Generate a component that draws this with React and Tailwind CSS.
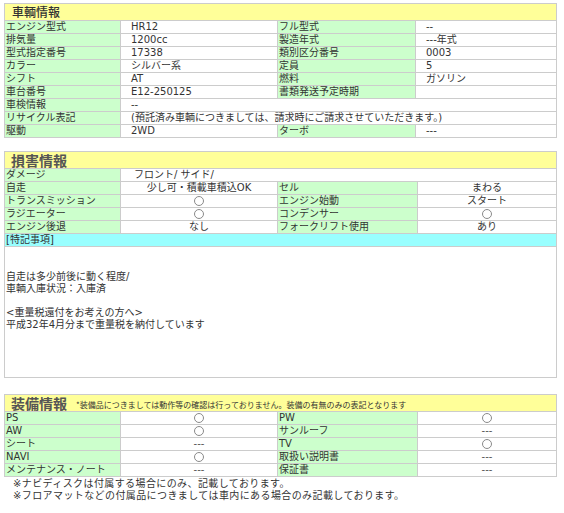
import React from "react";

const F = "font-['DejaVu_Sans','Noto_Sans_CJK_JP',sans-serif]";
const J = "font-['Noto_Sans_CJK_JP',sans-serif]";

const cell = "h-[12px] text-[10px] leading-[12px] whitespace-nowrap overflow-hidden text-[#333]";
const G = "bg-[#ccffcc]";

function Circle() {
  return (
    <span className="inline-block w-[10px] h-[10px] rounded-full border border-[#8a8a8a] align-top mt-px" />
  );
}

function Label({ children }) {
  return <div className={`${cell} ${G} pl-px`}>{children}</div>;
}
function Val({ children, center, span, pl = "pl-[10px]" }) {
  return (
    <div className={`${cell} bg-white ${center ? "text-center" : pl} ${span ? "col-span-3" : ""}`}>
      {children}
    </div>
  );
}

const s1 = [
  ["エンジン型式", "HR12", "フル型式", "--"],
  ["排気量", "1200cc", "製造年式", "---年式"],
  ["型式指定番号", "17338", "類別区分番号", "0003"],
  ["カラー", "シルバー系", "定員", "5"],
  ["シフト", "AT", "燃料", "ガソリン"],
  ["車台番号", "E12-250125", "書類発送予定時期", ""],
  ["車検情報", "--"],
  ["リサイクル表記", "(預託済み車輌につきましては、請求時にご請求させていただきます。)"],
  ["駆動", "2WD", "ターボ", "---"],
];

const s2 = [
  ["自走", "少し可・積載車積込OK", "セル", "まわる"],
  ["トランスミッション", "○", "エンジン始動", "スタート"],
  ["ラジエーター", "○", "コンデンサー", "○"],
  ["エンジン後退", "なし", "フォークリフト使用", "あり"],
];

const s3 = [
  ["PS", "○", "PW", "○"],
  ["AW", "○", "サンルーフ", "---"],
  ["シート", "---", "TV", "○"],
  ["NAVI", "○", "取扱い説明書", "---"],
  ["メンテナンス・ノート", "---", "保証書", "---"],
];

function V({ v }) {
  if (v === "○") return <Circle />;
  if (v === "---") return <span className="text-[#555]">---</span>;
  return v;
}

export default function App() {
  return (
    <div className={`${F} bg-white w-[564px] h-[513px] pt-[3px] pl-[4px]`}>
      {/* Section 1 */}
      <div className="w-[553px] bg-[#ccc] p-px flex flex-col gap-px">
        <div className="h-[16px] bg-[#ffff99] pl-[7px] flex items-center">
          <span className={`${J} text-[12px] leading-[16px] font-medium text-[#333]`}>車輌情報</span>
        </div>
        {s1.map((r, i) => (
          <div key={i} className="grid grid-cols-[115px_156px_137px_140px] gap-px">
            <Label>{r[0]}</Label>
            {r.length === 2 ? (
              <Val span>{r[1]}</Val>
            ) : (
              <>
                <Val>{r[1]}</Val>
                <Label>{r[2]}</Label>
                <Val>{r[3]}</Val>
              </>
            )}
          </div>
        ))}
      </div>

      {/* Section 2 */}
      <div className="mt-[13px] w-[553px] bg-[#ccc] p-px flex flex-col gap-px">
        <div className="h-[16px] bg-[#ffff99] pl-[6px] flex items-center">
          <span className={`${J} text-[14px] leading-[16px] font-bold text-[#555]`}>損害情報</span>
        </div>
        <div className="grid grid-cols-[115px_156px_139px_138px] gap-px">
          <Label>ダメージ</Label>
          <Val span pl="pl-[13px]">フロント/ サイド/</Val>
        </div>
        {s2.map((r, i) => (
          <div key={i} className="grid grid-cols-[115px_156px_139px_138px] gap-px">
            <Label>{r[0]}</Label>
            <Val center><V v={r[1]} /></Val>
            <Label>{r[2]}</Label>
            <Val center><V v={r[3]} /></Val>
          </div>
        ))}
        <div className={`${cell} bg-[#99ffff] pl-px`}>[特記事項]</div>
        <div className="h-[130px] bg-white pl-px text-[10px] leading-[12px] text-[#333]">
          <br />
          <br />
          自走は多少前後に動く程度/
          <br />
          車輌入庫状況：入庫済
          <br />
          <br />
          &lt;重量税還付をお考えの方へ&gt;
          <br />
          平成32年4月分まで重量税を納付しています
        </div>
      </div>

      {/* Section 3 */}
      <div className="mt-[16px] w-[553px] bg-[#ccc] p-px flex flex-col gap-px">
        <div className="h-[16px] bg-[#ffff99] pl-[6px] flex items-end gap-[9px]">
          <span className={`${J} text-[14px] leading-[16px] font-bold text-[#555]`}>装備情報</span>
          <span className={`${J} text-[8px] leading-[12px] text-[#333]`}>
            *装備品につきましては動作等の確認は行っておりません。装備の有無のみの表記となります
          </span>
        </div>
        {s3.map((r, i) => (
          <div key={i} className="grid grid-cols-[115px_156px_139px_138px] gap-px">
            <Label>{r[0]}</Label>
            <Val center><V v={r[1]} /></Val>
            <Label>{r[2]}</Label>
            <Val center><V v={r[3]} /></Val>
          </div>
        ))}
      </div>
      <div className="mt-px pl-[9px] text-[10px] leading-[12px] tracking-[0.4px] text-[#333]">
        <div>※ナビディスクは付属する場合にのみ、記載しております。</div>
        <div>※フロアマットなどの付属品につきましては車内にある場合のみ記載しております。</div>
      </div>
    </div>
  );
}
